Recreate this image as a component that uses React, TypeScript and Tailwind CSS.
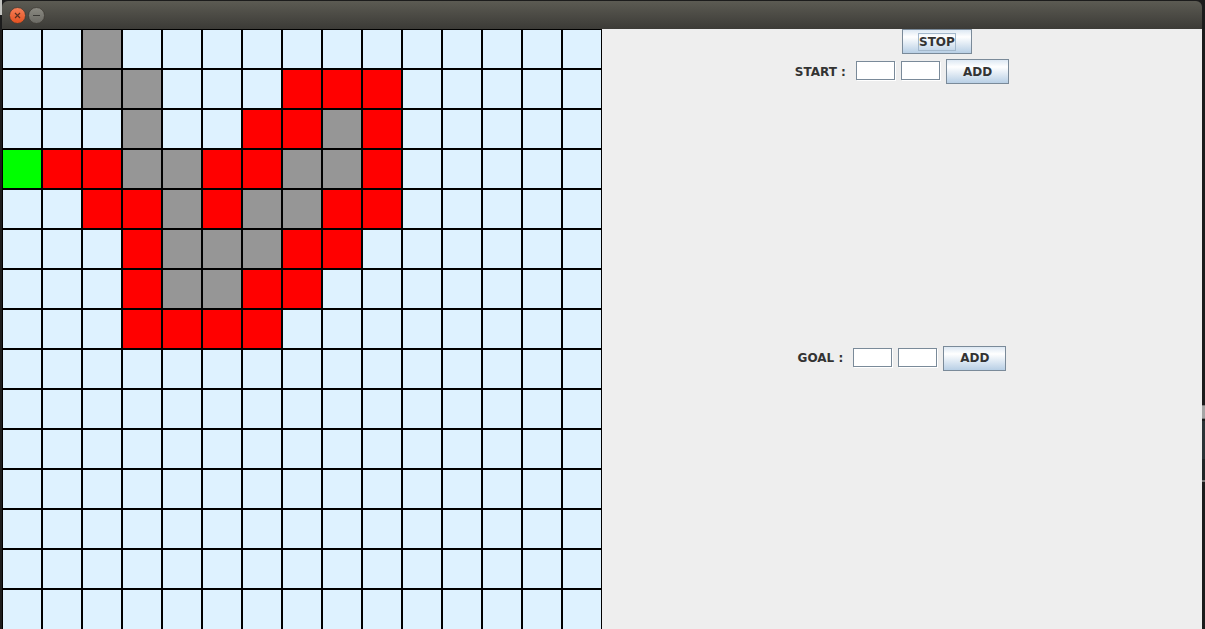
import { useState } from "react";

const MAP = [
  "..#............",
  "..##...rrr.....",
  "...#..rr#r.....",
  "srr##rr##r.....",
  "..rr#r##rr.....",
  "...r###rr......",
  "...r##rr.......",
  "...rrrr........",
  "...............",
  "...............",
  "...............",
  "...............",
  "...............",
  "...............",
  "...............",
];

const CELL_COLORS: Record<string, string> = {
  ".": "bg-[#def2ff]",
  "#": "bg-[#969696]",
  r: "bg-[#ff0000]",
  s: "bg-[#00ff00]",
};

const BUTTON =
  "flex h-[25px] items-center justify-center border border-[#7a8a99] bg-linear-to-b from-[#dde8f3] via-white via-30% to-[#b8cfe5]";

function TitleBar() {
  return (
    <header className="flex h-7 shrink-0 items-center gap-0.5 rounded-t-md bg-linear-to-b from-[#5c5b53] to-[#3c3b37] pl-[7px]">
      <button aria-label="Close" className="block">
        <svg width="17" height="17" viewBox="0 0 17 17">
          <defs>
            <linearGradient id="close" x1="0" y1="0" x2="0" y2="1">
              <stop offset="0" stopColor="#f58059" />
              <stop offset="1" stopColor="#e2501f" />
            </linearGradient>
          </defs>
          <circle cx="8.5" cy="8.5" r="8" fill="url(#close)" stroke="#3d3a33" strokeWidth="0.8" />
          <path d="M6 6l5 5M11 6l-5 5" stroke="#5a3020" strokeWidth="1.2" />
        </svg>
      </button>
      <button aria-label="Minimize" className="block">
        <svg width="17" height="17" viewBox="0 0 17 17">
          <defs>
            <linearGradient id="minimize" x1="0" y1="0" x2="0" y2="1">
              <stop offset="0" stopColor="#8b8a82" />
              <stop offset="1" stopColor="#6a6963" />
            </linearGradient>
          </defs>
          <circle cx="8.5" cy="8.5" r="8" fill="url(#minimize)" stroke="#3d3a33" strokeWidth="0.8" />
          <path d="M5 8.5h7" stroke="#3a3935" />
        </svg>
      </button>
    </header>
  );
}

function Board() {
  return (
    <div className="grid shrink-0 auto-rows-[40px] grid-cols-[repeat(15,40px)] content-start">
      {MAP.flatMap((row, y) =>
        row.split("").map((cell, x) => (
          <div
            key={`${x}-${y}`}
            className={`border-x border-t border-black ${y < MAP.length - 1 ? "border-b" : ""} ${CELL_COLORS[cell]}`}
          />
        )),
      )}
    </div>
  );
}

function PointForm({ label }: { label: string }) {
  const [x, setX] = useState("");
  const [y, setY] = useState("");
  const field =
    "mb-0.5 h-[19px] w-[39px] border border-[#7a8a99] bg-white px-1 shadow-[1px_1px_0_white] outline-none";
  return (
    <form
      className="flex flex-1 items-start justify-center pt-[5px]"
      onSubmit={(event) => event.preventDefault()}
    >
      <div className="flex h-[25px] items-center gap-1.5">
        <label htmlFor={`${label}-x`} className="pr-1">
          {label} :
        </label>
        <input id={`${label}-x`} value={x} onChange={(e) => setX(e.target.value)} className={field} />
        <input
          aria-label={`${label} y`}
          value={y}
          onChange={(e) => setY(e.target.value)}
          className={field}
        />
        <button type="submit" className={`${BUTTON} px-4`}>
          ADD
        </button>
      </div>
    </form>
  );
}

export default function App() {
  return (
    <div className="flex min-h-screen bg-[#1c1c1c] font-['DejaVu_Sans',sans-serif] text-xs font-bold text-[#333333]">
      <div className="flex w-0.5 shrink-0 flex-col">
        <div className="h-[15px] bg-[#c4c4c0]" />
      </div>
      <div className="flex min-w-0 flex-1 flex-col pt-px">
        <TitleBar />
        <main className="flex flex-1 bg-[#eeeeee]">
          <Board />
          <section className="flex min-w-0 flex-1 flex-col pb-0.5">
            <button className={`${BUTTON} ml-[50%] self-start px-[15px]`}>
              <span className="border border-[#a3b8cc] leading-4">STOP</span>
            </button>
            <PointForm label="START" />
            <PointForm label="GOAL" />
          </section>
        </main>
      </div>
      <div className="flex w-[3px] shrink-0 flex-col pt-[405px]">
        <div className="h-3.5 border-y border-[#777777] bg-[#a5a5a5]" />
        <div className="mt-0.5 h-[38px] bg-[#2b3336]" />
        <div className="h-[21px] bg-[#202526]" />
        <div className="h-0.5 bg-[#777777]" />
      </div>
    </div>
  );
}
